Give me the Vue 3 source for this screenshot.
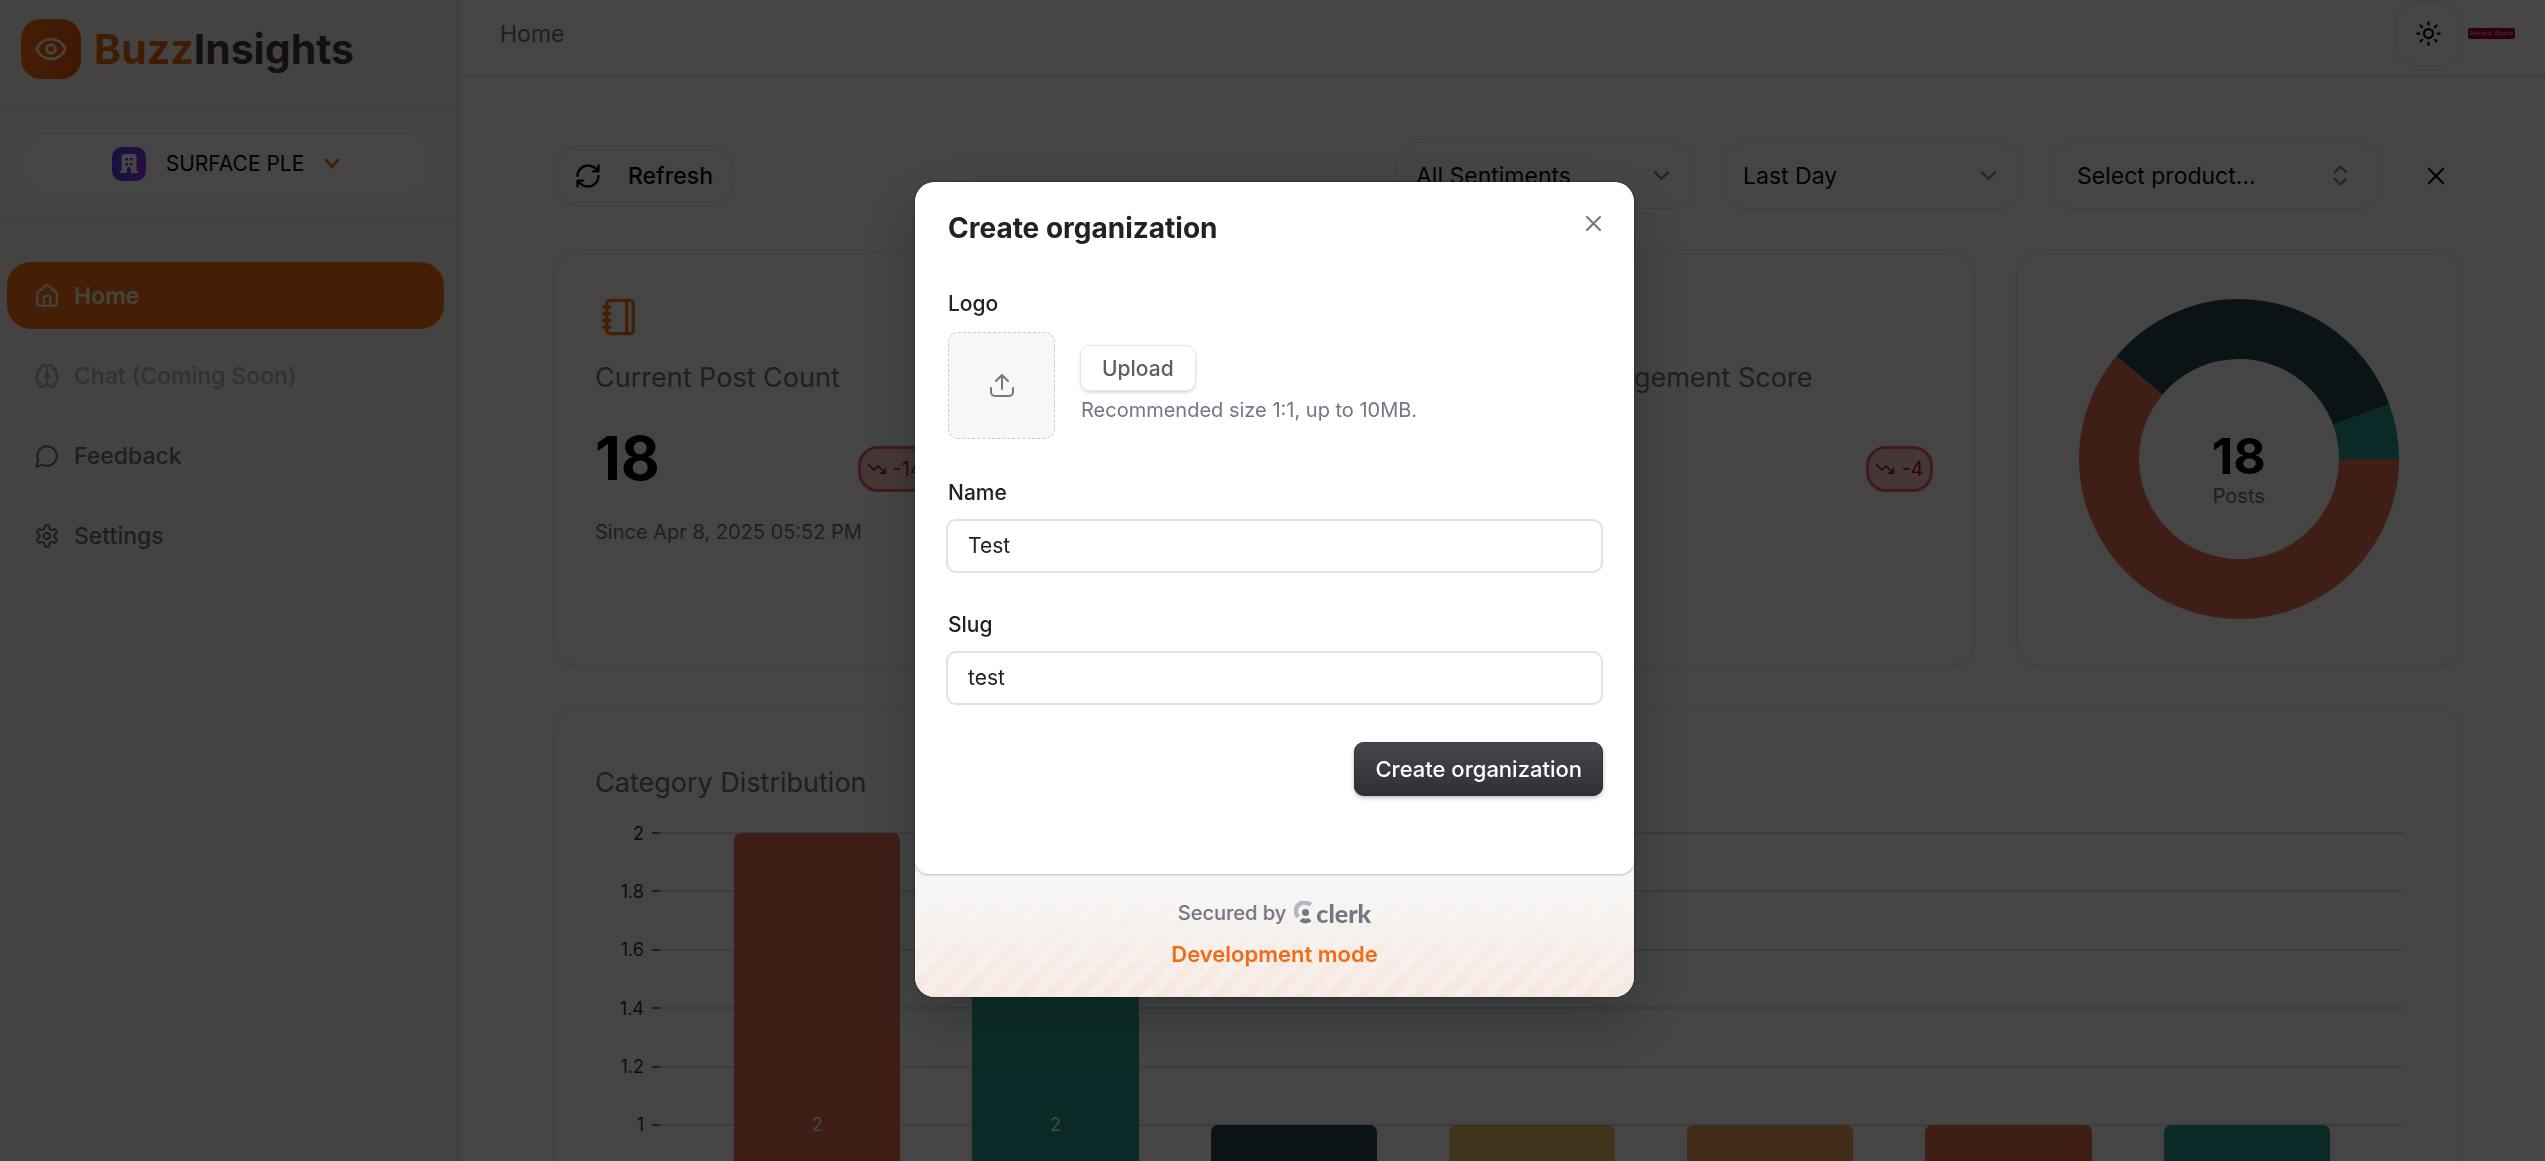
<script setup>
import { ref } from 'vue'

const name = ref('Test')
const slug = ref('test')
const sentiment = ref('All Sentiments')
const period = ref('Last Day')

const navItems = [
  { label: 'Home', icon: 'home', state: 'active' },
  { label: 'Chat (Coming Soon)', icon: 'brain', state: 'disabled' },
  { label: 'Feedback', icon: 'message', state: '' },
  { label: 'Settings', icon: 'settings', state: '' },
]

const ticks = ['2', '1.8', '1.6', '1.4', '1.2', '1']
const bars = [
  { value: 2, label: '2', color: '#e76f51' },
  { value: 2, label: '2', color: '#2a9d8f' },
  { value: 1, color: '#264653' },
  { value: 1, color: '#e9c46a' },
  { value: 1, color: '#f4a261' },
  { value: 1, color: '#e76f51' },
  { value: 1, color: '#2a9d8f' },
]

const slices = [
  { count: 1, color: '#2a9d8f' },
  { count: 6, color: '#264653' },
  { count: 11, color: '#e76f51' },
]
const total = slices.reduce((sum, s) => sum + s.count, 0)

function arcs() {
  let start = 0
  return slices.map((s) => {
    const end = start + (s.count / total) * Math.PI * 2
    const point = (r, a) => `${160 + r * Math.cos(a)} ${160 - r * Math.sin(a)}`
    const large = end - start > Math.PI ? 1 : 0
    const d = `M${point(160, start)}A160 160 0 ${large} 0 ${point(160, end)}L${point(100, end)}A100 100 0 ${large} 1 ${point(100, start)}Z`
    start = end
    return { d, color: s.color }
  })
}
const donut = arcs()
</script>

<template>
  <div class="app">
    <aside class="sidebar">
      <div class="brand">
        <span class="brand-mark">
          <svg class="icon" width="34" height="34" viewBox="0 0 24 24">
            <path d="M2.062 12.348a1 1 0 0 1 0-.696 10.75 10.75 0 0 1 19.876 0 1 1 0 0 1 0 .696 10.75 10.75 0 0 1-19.876 0" />
            <circle cx="12" cy="12" r="3" />
          </svg>
        </span>
        <span class="brand-name"><span class="brand-accent">Buzz</span>Insights</span>
      </div>
      <div class="switcher-wrap">
        <button class="switcher" type="button">
          <span class="org-mark">
            <svg width="20" height="22" viewBox="0 0 20 22">
              <path fill="currentColor" fill-rule="evenodd" d="M5 1h10a2.500 2.500 0 0 1 2.500 2.500V18H19v2h-7v-4a2 2 0 0 0-4 0v4H1v-2h1.500V3.500A2.500 2.500 0 0 1 5 1Zm1.500 4v2.500H9V5Zm4.500 0v2.500h2.500V5ZM6.500 10v2.500H9V10Zm4.500 0v2.500h2.500V10Z" />
            </svg>
          </span>
          <span>SURFACE PLE</span>
          <svg class="icon switcher-arrow" width="16" height="12" viewBox="0 0 16 12"><path d="m2 2 6 7 6-7" /></svg>
        </button>
      </div>
      <nav class="nav">
        <a v-for="item in navItems" :key="item.label" href="#" class="nav-item" :class="item.state">
          <svg class="icon" width="26" height="26" viewBox="0 0 24 24">
            <template v-if="item.icon === 'home'">
              <path d="M15 21v-8a1 1 0 0 0-1-1h-4a1 1 0 0 0-1 1v8" />
              <path d="M3 10a2 2 0 0 1 .709-1.528l7-5.999a2 2 0 0 1 2.582 0l7 5.999A2 2 0 0 1 21 10v9a2 2 0 0 1-2 2H5a2 2 0 0 1-2-2z" />
            </template>
            <template v-else-if="item.icon === 'brain'">
              <path d="M12 5a3 3 0 1 0-5.997.125 4 4 0 0 0-2.526 5.770 4 4 0 0 0 .556 6.588A4 4 0 1 0 12 18Z" />
              <path d="M12 5a3 3 0 1 1 5.997.125 4 4 0 0 1 2.526 5.770 4 4 0 0 1-.556 6.588A4 4 0 1 1 12 18Z" />
              <path d="M15 13a4.500 4.500 0 0 1-3-4 4.500 4.500 0 0 1-3 4M17.599 6.500a3 3 0 0 0 .399-1.375M6.003 5.125A3 3 0 0 0 6.401 6.500M3.477 10.896a4 4 0 0 1 .585-.396M19.938 10.500a4 4 0 0 1 .585.396M6 18a4 4 0 0 1-1.967-.516M19.967 17.484A4 4 0 0 1 18 18" />
            </template>
            <path v-else-if="item.icon === 'message'" d="M7.900 20A9 9 0 1 0 4 16.100L2 22Z" />
            <template v-else>
              <path d="M12.220 2h-.44a2 2 0 0 0-2 2v.18a2 2 0 0 1-1 1.730l-.43.25a2 2 0 0 1-2 0l-.15-.08a2 2 0 0 0-2.730.73l-.22.38a2 2 0 0 0 .73 2.730l.15.1a2 2 0 0 1 1 1.720v.51a2 2 0 0 1-1 1.740l-.15.09a2 2 0 0 0-.73 2.730l.22.38a2 2 0 0 0 2.730.73l.15-.08a2 2 0 0 1 2 0l.43.25a2 2 0 0 1 1 1.730V20a2 2 0 0 0 2 2h.44a2 2 0 0 0 2-2v-.18a2 2 0 0 1 1-1.730l.43-.25a2 2 0 0 1 2 0l.15.08a2 2 0 0 0 2.730-.73l.22-.39a2 2 0 0 0-.73-2.730l-.15-.08a2 2 0 0 1-1-1.740v-.5a2 2 0 0 1 1-1.740l.15-.09a2 2 0 0 0 .73-2.730l-.22-.38a2 2 0 0 0-2.730-.73l-.15.08a2 2 0 0 1-2 0l-.43-.25a2 2 0 0 1-1-1.730V4a2 2 0 0 0-2-2z" />
              <circle cx="12" cy="12" r="3" />
            </template>
          </svg>
          <span>{{ item.label }}</span>
        </a>
      </nav>
    </aside>

    <div class="page">
      <header class="topbar">
        <a class="crumb" href="#">Home</a>
        <div class="topbar-right">
          <button class="theme" type="button" aria-label="Toggle theme">
            <svg class="icon" width="27" height="27" viewBox="0 0 24 24">
              <circle cx="12" cy="12" r="4" />
              <path d="M12 2v2M12 20v2m-7.070-17.070 1.410 1.410m11.320 11.320 1.410 1.410M2 12h2m16 0h2M6.340 17.660l-1.410 1.410M19.070 4.930l-1.410 1.410" />
            </svg>
          </button>
          <span class="user-badge">Benard Ogata</span>
        </div>
      </header>

      <main class="content">
        <div class="toolbar">
          <button class="refresh" type="button">
            <svg class="icon" width="28" height="28" viewBox="0 0 24 24">
              <path d="M3 12a9 9 0 0 1 9-9 9.750 9.750 0 0 1 6.740 2.740L21 8M21 3v5h-5M21 12a9 9 0 0 1-9 9 9.750 9.750 0 0 1-6.740-2.740L3 16M8 16H3v5" />
            </svg>
            <span>Refresh</span>
          </button>
          <div class="filters">
            <div class="select">
              <select v-model="sentiment" aria-label="Sentiment"><option>All Sentiments</option></select>
              <svg class="icon" width="27" height="27" viewBox="0 0 24 24"><path d="m6 9 6 6 6-6" /></svg>
            </div>
            <div class="select">
              <select v-model="period" aria-label="Period"><option>Last Day</option></select>
              <svg class="icon" width="27" height="27" viewBox="0 0 24 24"><path d="m6 9 6 6 6-6" /></svg>
            </div>
            <button class="product" type="button">
              <span>Select product...</span>
              <svg class="icon" width="27" height="27" viewBox="0 0 24 24"><path d="m7 15 5 5 5-5M7 9l5-5 5 5" /></svg>
            </button>
            <button class="clear" type="button" aria-label="Clear filters">
              <svg class="icon" width="28" height="28" viewBox="0 0 24 24"><path d="M18 6 6 18M6 6l12 12" /></svg>
            </button>
          </div>
        </div>

        <section class="cards">
          <article class="card">
            <span class="card-icon">
              <svg class="icon" width="40" height="40" viewBox="0 0 24 24">
                <path d="M2 6h4M2 10h4M2 14h4M2 18h4M16 2v20" />
                <rect x="4" y="2" width="16" height="20" rx="2" />
              </svg>
            </span>
            <h3 class="card-title">Current Post Count</h3>
            <div class="card-row">
              <strong class="figure">18</strong>
              <span class="trend wide">
                <svg class="icon" width="20" height="20" viewBox="0 0 24 24"><path d="m22 17-8.500-8.500-5 5L2 7M16 17h6v-6" /></svg>
                -14
              </span>
            </div>
            <p class="since">Since Apr 8, 2025 05:52 PM</p>
          </article>
          <article class="card"></article>
          <article class="card">
            <span class="card-icon"></span>
            <h3 class="card-title">Engagement Score</h3>
            <div class="card-row">
              <span></span>
              <span class="trend">
                <svg class="icon" width="20" height="20" viewBox="0 0 24 24"><path d="m22 17-8.500-8.500-5 5L2 7M16 17h6v-6" /></svg>
                -4
              </span>
            </div>
          </article>
          <article class="card donut-card">
            <svg width="320" height="320" viewBox="0 0 320 320">
              <path v-for="arc in donut" :key="arc.color" :d="arc.d" :fill="arc.color" />
            </svg>
            <div class="donut-label">
              <strong>{{ total }}</strong>
              <span>Posts</span>
            </div>
          </article>
        </section>

        <section class="card chart">
          <h3 class="card-title">Category Distribution</h3>
          <div class="plot">
            <div class="axis"><span v-for="t in ticks" :key="t">{{ t }}</span></div>
            <div class="area">
              <div class="lines"><i v-for="t in ticks" :key="t"></i></div>
              <div class="bars">
                <div
                  v-for="(bar, i) in bars"
                  :key="i"
                  class="bar"
                  :style="{ height: bar.value * 50 + '%', background: bar.color }"
                >
                  {{ bar.label }}
                </div>
              </div>
            </div>
          </div>
        </section>
      </main>
    </div>

    <div class="overlay">
      <div class="modal" role="dialog" aria-modal="true" aria-labelledby="dialog-title">
        <form class="modal-body" @submit.prevent>
          <div class="modal-head">
            <h1 id="dialog-title">Create organization</h1>
            <button class="close" type="button" aria-label="Close">
              <svg width="15" height="15" viewBox="0 0 15 15"><path d="m1 1 13 13M14 1 1 14" /></svg>
            </button>
          </div>

          <span class="label">Logo</span>
          <div class="logo-row">
            <div class="drop">
              <svg width="24" height="24" viewBox="0 0 24 24"><path d="M12 16V2M6 8l6-6 6 6M1 15v4a4 4 0 0 0 4 4h14a4 4 0 0 0 4-4v-4" /></svg>
            </div>
            <div class="upload-col">
              <button class="upload" type="button">Upload</button>
              <span class="hint">Recommended size 1:1, up to 10MB.</span>
            </div>
          </div>

          <div class="field">
            <label class="label" for="org-name">Name</label>
            <input id="org-name" v-model="name" type="text" />
          </div>
          <div class="field">
            <label class="label" for="org-slug">Slug</label>
            <input id="org-slug" v-model="slug" type="text" />
          </div>

          <button class="submit" type="submit">Create organization</button>
        </form>
        <footer class="modal-foot">
          <div class="secured">
            <span>Secured by</span>
            <a class="clerk" href="#" aria-label="clerk">
              <svg width="20" height="23" viewBox="0 0 20 23">
                <path fill="none" stroke="#b7b6c0" stroke-width="4.500" d="M16.500 4A8.500 8.500 0 0 0 4.300 16" />
                <circle cx="11.500" cy="11.500" r="3.500" fill="currentColor" />
                <path fill="currentColor" d="M6 19.500 8.500 17q3 1.500 6 0l2.500 2.500q.5.800-.3 1.300-5.200 3.400-10.400 0-.8-.5-.3-1.300Z" />
              </svg>
              <span>clerk</span>
            </a>
          </div>
          <span class="dev">Development mode</span>
        </footer>
      </div>
    </div>
  </div>
</template>

<style>
body {
  margin: 0;
  overflow: hidden;
}
</style>

<style scoped>
.app {
  display: flex;
  height: 100vh;
  overflow: hidden;
  background: #fff;
  color: #0c0a09;
  font-family: Inter, "Liberation Sans", sans-serif;
  font-size: 23px;
}
.app *,
.app {
  box-sizing: border-box;
}
h1,
h3,
p {
  margin: 0;
  font-weight: 400;
}
button,
select,
input {
  margin: 0;
  padding: 0;
  border: 0;
  background: none;
  color: inherit;
  font: inherit;
}
a {
  color: inherit;
  text-decoration: none;
}
svg {
  display: block;
  flex: none;
}
.icon {
  fill: none;
  stroke: currentColor;
  stroke-width: 2;
  stroke-linecap: round;
  stroke-linejoin: round;
}

.sidebar {
  flex: none;
  width: 460px;
  border-right: 3px solid #e5e7eb;
  background: #fcf8f1;
}
.brand {
  display: flex;
  align-items: center;
  gap: 13px;
  height: 106px;
  padding: 0 21px 8px;
  border-bottom: 1px solid #e7e5e4;
}
.brand-mark {
  display: grid;
  place-items: center;
  width: 60px;
  height: 60px;
  border-radius: 20px;
  background: linear-gradient(90deg, #f97316, #ea580c);
  color: #fff7ed;
}
.brand-name {
  color: #44403c;
  font-size: 41px;
  font-weight: 700;
}
.brand-accent {
  color: #ea6a12;
}
.switcher-wrap {
  padding: 27px 26px 27px 21px;
  border-bottom: 1px solid #e7e5e4;
}
.switcher {
  display: flex;
  align-items: center;
  justify-content: center;
  gap: 20px;
  width: 100%;
  height: 61px;
  border: 1px solid #eceef2;
  border-radius: 24px;
  background: #fff;
  color: #020617;
  font-size: 21px;
}
.org-mark {
  display: grid;
  place-items: center;
  width: 34px;
  height: 34px;
  border-radius: 10px;
  background: linear-gradient(90deg, #5b3df5, #9333ea);
  color: #fff;
}
.switcher-arrow {
  color: #f97316;
  stroke-width: 3;
}
.nav {
  display: flex;
  flex-direction: column;
  gap: 13px;
  padding: 40px 13px 0 7px;
}
.nav-item {
  display: flex;
  align-items: center;
  gap: 14px;
  height: 67px;
  padding: 0 27px;
  border-radius: 24px;
  color: #78716c;
  font-weight: 500;
}
.nav-item.active {
  background: #f97316;
  color: #fff7ed;
  font-weight: 600;
}
.nav-item.disabled {
  color: #bcb6b0;
}

.page {
  flex: 1;
  min-width: 0;
}
.topbar {
  display: flex;
  align-items: center;
  justify-content: space-between;
  height: 77px;
  padding: 0 30px 8px 40px;
  border-bottom: 2px solid #e2e3e5;
}
.crumb {
  color: #78716c;
}
.topbar-right {
  display: flex;
  align-items: center;
  gap: 6px;
}
.theme {
  display: grid;
  place-items: center;
  width: 67px;
  height: 67px;
  border: 1px solid #e7e5e4;
  border-radius: 24px;
}
.user-badge {
  display: grid;
  place-items: center;
  width: 47px;
  height: 11px;
  border-radius: 2px;
  background: #a8003c;
  color: #f5c6d6;
  font: 6px "Liberation Mono", monospace;
  white-space: nowrap;
}

.content {
  display: flex;
  flex-direction: column;
  gap: 41px;
  padding: 65px 83px 41px 93px;
}
.toolbar,
.filters {
  display: flex;
  align-items: center;
  justify-content: space-between;
  gap: 27px;
}
.refresh {
  display: flex;
  align-items: center;
  gap: 26px;
  height: 60px;
  padding: 0 20px;
  border: 1px solid #e7e5e4;
  border-radius: 24px;
  font-weight: 500;
}
.select {
  display: grid;
  align-items: center;
  width: 300px;
}
.select select,
.select svg {
  grid-area: 1 / 1;
}
.select select {
  width: 100%;
  height: 67px;
  padding: 0 20px;
  border: 1px solid #e7e5e4;
  border-radius: 24px;
  appearance: none;
}
.select svg {
  justify-self: end;
  margin-right: 20px;
  color: #8a8a8a;
  pointer-events: none;
}
.product {
  display: flex;
  align-items: center;
  justify-content: space-between;
  width: 333px;
  height: 67px;
  padding: 0 27px;
  border: 1px solid #e7e5e4;
  border-radius: 24px;
}
.product svg {
  color: #8a8a8a;
}
.clear {
  display: grid;
  place-items: center;
  width: 53px;
  height: 53px;
}

.cards {
  display: grid;
  grid-template-columns: repeat(4, 1fr);
  gap: 41px;
}
.card {
  min-height: 417px;
  padding: 41px;
  border: 1px solid #e7e5e4;
  border-radius: 27px;
  box-shadow: 0 2px 3px rgba(0, 0, 0, 0.06);
}
.card-icon {
  display: flex;
  height: 50px;
  padding: 5px;
  color: #f97316;
}
.card-title {
  margin-top: 16px;
  color: #78716c;
  font-size: 27px;
  line-height: 40px;
}
.card-row {
  display: flex;
  align-items: flex-end;
  justify-content: space-between;
  height: 68px;
  margin: 26px 0;
}
.figure {
  color: #000;
  font-size: 60px;
  line-height: 68px;
}
.trend {
  display: flex;
  align-items: center;
  gap: 6px;
  height: 46px;
  padding: 0 6px;
  border: 3px solid #f06060;
  border-radius: 20px;
  background: #fecaca;
  color: #991b1b;
  font-size: 20px;
}
.trend.wide {
  width: 100px;
}
.since {
  color: #78716c;
  font-size: 20px;
  line-height: 28px;
}
.donut-card {
  display: grid;
  place-items: center;
}
.donut-card > * {
  grid-area: 1 / 1;
}
.donut-label {
  display: flex;
  flex-direction: column;
  align-items: center;
  padding-top: 18px;
  color: #78716c;
  font-size: 20px;
}
.donut-label strong {
  color: #000;
  font-size: 50px;
  line-height: 56px;
}

.chart .card-title {
  margin: 13px 0 30px;
}
.plot {
  display: flex;
  height: 583px;
  padding-right: 17px;
}
.axis,
.lines {
  display: flex;
  flex-direction: column;
  justify-content: space-between;
  height: 292px;
}
.axis {
  width: 66px;
  color: #333;
  font-size: 18px;
}
.axis span {
  display: flex;
  align-items: center;
  justify-content: flex-end;
  gap: 8px;
  height: 0;
}
.axis span::after {
  width: 9px;
  height: 2px;
  background: #777;
  content: "";
}
.area {
  display: grid;
  flex: 1;
}
.lines,
.bars {
  grid-area: 1 / 1;
}
.lines i {
  height: 0;
  outline: 1px solid #dcdcdc;
}
.bars {
  display: flex;
  align-items: flex-end;
  gap: 72px;
  height: 583px;
  padding: 0 73px;
}
.bar {
  display: grid;
  flex: 1;
  place-items: center;
  border-radius: 7px 7px 0 0;
  color: #fff;
  font-size: 18px;
  z-index: 1;
}

.overlay {
  position: fixed;
  z-index: 10;
  inset: 0;
  display: grid;
  place-items: center;
  padding: 17px 0 0 4px;
  background: rgba(0, 0, 0, 0.73);
}
.modal {
  width: min(719px, 100%);
  overflow: hidden;
  border-radius: 20px;
  background: #f7f7f7;
  box-shadow: 0 25px 60px rgba(20, 30, 30, 0.35), 0 0 3px rgba(0, 0, 0, 0.5);
  color: #212126;
  font-size: 21px;
}
.modal-body {
  position: relative;
  display: flex;
  flex-direction: column;
  padding: 28px 31px 78px;
  border-radius: 0 0 14px 14px;
  background: #fff;
  box-shadow: 0 1px 3px rgba(0, 0, 0, 0.25);
  z-index: 1;
}
.modal-head {
  display: flex;
  justify-content: space-between;
  margin-bottom: 44px;
  padding: 0 2px;
}
.modal-head h1 {
  font-size: 28px;
  font-weight: 700;
  line-height: 36px;
}
.close {
  height: 28px;
  color: #747686;
}
.close svg,
.drop svg {
  fill: none;
  stroke: currentColor;
  stroke-width: 2;
  stroke-linecap: round;
  stroke-linejoin: round;
}
.label {
  padding: 0 2px;
  font-weight: 500;
  line-height: 28px;
}
.logo-row {
  display: flex;
  align-items: center;
  gap: 25px;
  margin: 14px 0 0 2px;
}
.drop {
  display: grid;
  place-items: center;
  width: 107px;
  height: 107px;
  border: 1px dashed #ccc;
  border-radius: 10px;
  background: #f7f7f7;
  color: #747686;
}
.upload-col {
  display: flex;
  flex-direction: column;
  align-items: flex-start;
  gap: 4px;
}
.upload {
  height: 46px;
  padding: 0 21px;
  border: 1px solid #e6e6e6;
  border-radius: 10px;
  box-shadow: 0 2px 3px rgba(0, 0, 0, 0.14);
  color: #5e5e63;
  font-weight: 500;
}
.hint {
  padding-left: 1px;
  color: #747686;
  font-size: 20px;
  line-height: 30px;
}
.field {
  display: flex;
  flex-direction: column;
  gap: 12px;
  margin-top: 40px;
}
.field + .field {
  margin-top: 38px;
}
.field input {
  width: 100%;
  height: 54px;
  padding: 0 20px;
  border: 2px solid #e2e2e2;
  border-radius: 10px;
  background: #fff;
}
.submit {
  align-self: flex-end;
  height: 54px;
  margin-top: 37px;
  padding: 0 21px;
  border-radius: 10px;
  background: linear-gradient(#46474d, #2f3037);
  box-shadow: 0 2px 4px rgba(0, 0, 0, 0.25), inset 0 1px 1px rgba(255, 255, 255, 0.1), inset 0 0 0 1px #2f3037;
  color: #fff;
  font-size: 22px;
  font-weight: 500;
}
.modal-foot {
  display: flex;
  flex-direction: column;
  align-items: center;
  gap: 13px;
  padding: 25px 0 29px;
  background:
    linear-gradient(#f7f7f7, rgba(247, 247, 247, 0)),
    repeating-linear-gradient(-45deg, #f7ede8 0 10px, #f6e7de 10px 20px);
  line-height: 28px;
}
.secured {
  display: flex;
  align-items: center;
  gap: 8px;
  color: #747686;
  font-size: 20px;
  font-weight: 500;
}
.clerk {
  display: flex;
  align-items: center;
  gap: 2px;
  font-family: Lato, sans-serif;
  font-size: 25px;
  font-weight: 900;
}
.dev {
  color: #f36b16;
  font-size: 22px;
  font-weight: 600;
}
</style>
